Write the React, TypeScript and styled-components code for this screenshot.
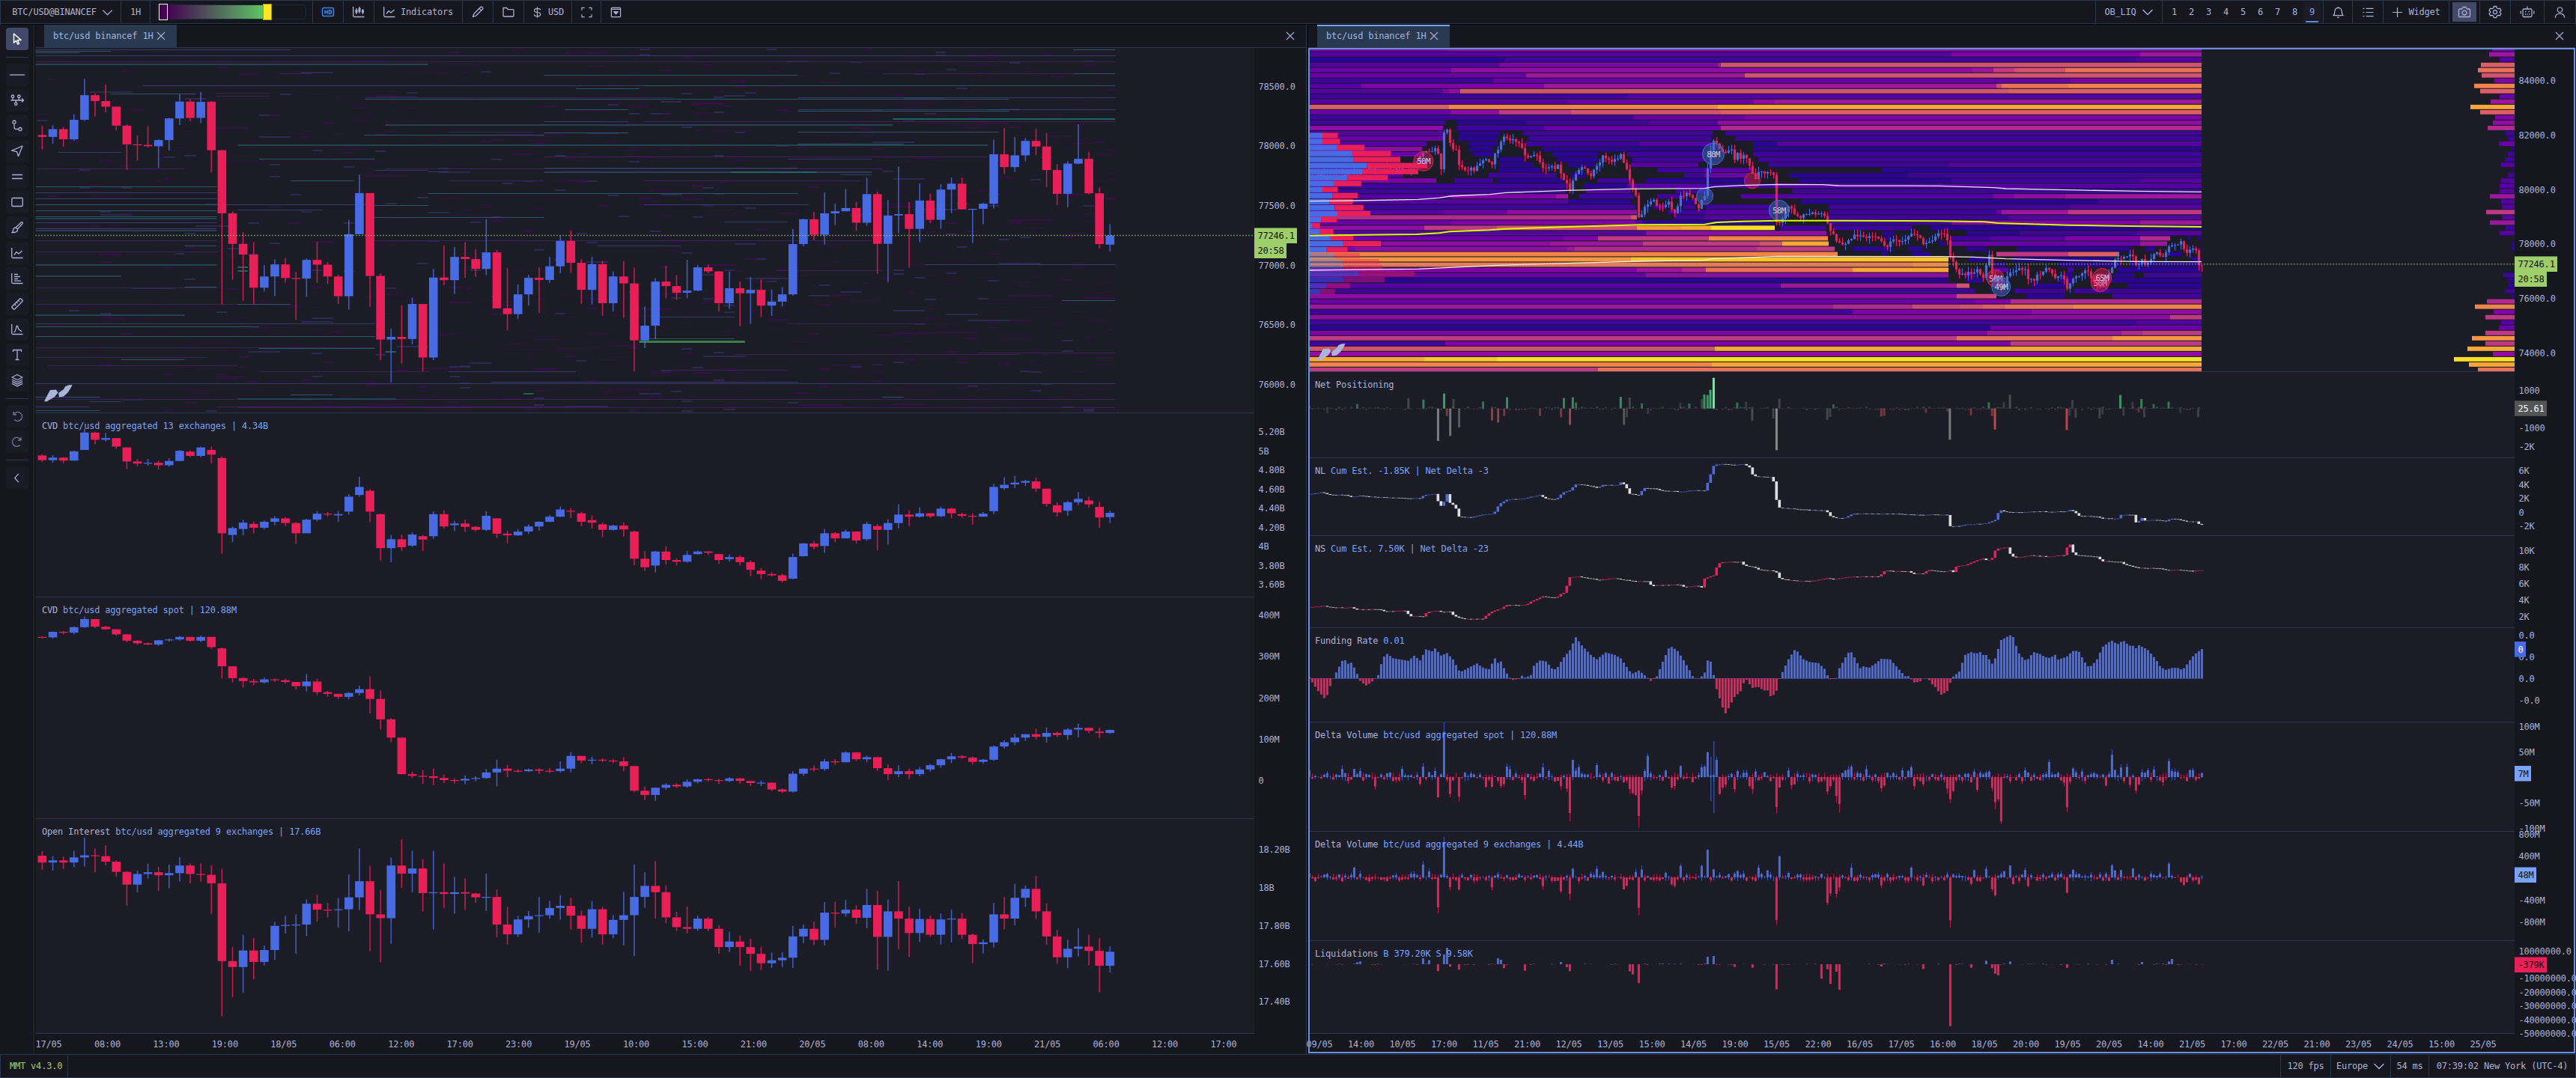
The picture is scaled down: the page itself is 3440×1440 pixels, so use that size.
import * as React from 'react';
import styled, { createGlobalStyle } from 'styled-components';

const BLUE = '#486be4';
const RED = '#e91f58';
const BG = '#1b1c26';
const PANEL = '#16171e';
const LINE = '#29394f';
const TEXT = '#a9b1d6';
const ACCENT = '#7aa2f7';
const GREEN = '#9ece6a';

const GlobalStyle = createGlobalStyle`
  body {
    margin: 0;
    background: ${PANEL};
    color: ${TEXT};
    font-family: 'DejaVu Sans Mono', 'Liberation Mono', monospace;
    font-size: 12px;
    letter-spacing: -0.2px;
    line-height: 16px;
    overflow: hidden;
  }

  * {
    box-sizing: border-box;
  }
`;

const Screen = styled.div`
  display: flex;
  flex-direction: column;
  width: 3440px;
  height: 1440px;
`;

const TopBar = styled.header`
  display: flex;
  height: 33px;
  border: 1px solid ${LINE};
  border-bottom: 0;
  box-shadow: inset 0 -1px 0 #000, inset 0 -2px 0 ${LINE};
`;

const Cell = styled.div<{ w: number; end?: boolean; indent?: number }>`
  display: flex;
  align-items: center;
  justify-content: center;
  gap: 7px;
  width: ${p => p.w}px;
  height: 30px;
  padding-left: ${p => p.indent || 0}px;
  flex: none;
  white-space: pre;
  border-right: ${p => (p.end ? 0 : 1)}px solid ${LINE};
`;

const Spacer = styled.div`
  flex: 1;
  border-right: 1px solid ${LINE};
`;

const Slider = styled.div`
  display: flex;
  width: 200px;
  height: 20px;
  margin-right: 1px;
  padding: 0 2px;
  border: 1px solid #202a38;
  border-radius: 5px;
`;

const Ramp = styled.div`
  display: flex;
  justify-content: space-between;
  align-items: center;
  width: 151px;
  height: 18px;
  background: linear-gradient(90deg, #440154 8%, #5ec962 94%);
`;

const Handle = styled.div<{ color: string; edge: string }>`
  width: 12px;
  height: 22px;
  flex: none;
  background: ${p => p.color};
  border: 1px solid ${p => p.edge};
`;

const Slots = styled.div`
  display: flex;
  width: 215px;
  height: 30px;
  flex: none;
  justify-content: flex-end;
  padding-right: 3px;
  border-right: 1px solid ${LINE};
`;

const Slot = styled.div<{ active?: boolean }>`
  width: 23px;
  height: 28px;
  margin-top: 1px;
  padding-top: 6px;
  text-align: center;
  color: ${p => (p.active ? ACCENT : TEXT)};
  background: ${p => (p.active ? BG : 'none')};
  background-image: ${p => (p.active ? 'linear-gradient(#6688e0, #6688e0)' : 'none')};
  background-size: 17px 2px;
  background-position: center bottom;
  background-repeat: no-repeat;
`;

const Pressed = styled.div`
  display: flex;
  align-items: center;
  justify-content: center;
  width: 32px;
  height: 26px;
  background: #414868;
`;

const Body = styled.div`
  display: flex;
  flex: 1;
`;

const Sidebar = styled.nav`
  display: flex;
  flex-direction: column;
  align-items: center;
  gap: 4px;
  width: 47px;
  padding: 4px 1px 0 0;
  flex: none;
  border-right: 1px solid #000;
  box-shadow: inset -1px 0 0 ${LINE};
`;

const Tool = styled.button<{ active?: boolean; dim?: boolean }>`
  display: flex;
  align-items: center;
  justify-content: center;
  width: 30px;
  height: 30px;
  padding: 0;
  border: 0;
  border-radius: 4px;
  color: ${p => (p.active ? '#fff' : p.dim ? '#737894' : TEXT)};
  background: ${p => (p.active ? '#414868' : '#1a1b25')};
`;

const Rule = styled.div`
  width: 30px;
  height: 1px;
  margin: 5px 0 4px;
  background: ${LINE};
`;

const Widget = styled.section<{ w: number }>`
  width: ${p => p.w}px;
  flex: none;
`;

const Split = styled.div`
  width: 3px;
  flex: none;
  border-left: 1px solid ${LINE};
  background: #0e0f15;
`;

const TabBar = styled.div`
  display: flex;
  align-items: center;
  justify-content: space-between;
  height: 31px;
  padding: 0 13px 0 12px;
  border-bottom: 1px solid ${LINE};
`;

const Tab = styled.div<{ focused?: boolean }>`
  display: flex;
  align-items: center;
  gap: 3px;
  width: 177px;
  height: 30px;
  padding-left: 12px;
  background: ${LINE};
  box-shadow: ${p => (p.focused ? `inset 0 2px 0 ${ACCENT}` : 'none')};
`;

const Charts = styled.div<{ focused?: boolean }>`
  position: relative;
  height: 1344px;

  &::after {
    content: '';
    position: absolute;
    inset: 0 0 1px;
    pointer-events: none;
    border: ${p => (p.focused ? `2px solid #6a8ee0` : '0')};
  }
`;

const PaneRow = styled.div<{ h: number }>`
  position: relative;
  display: flex;
  height: ${p => p.h}px;
`;

const Plot = styled.svg`
  flex: none;
  background: ${BG};
  border-bottom: 1px solid ${LINE};
`;

const Axis = styled.svg`
  flex: none;
  overflow: visible;
  background: ${PANEL};
`;

const PaneTitle = styled.div`
  position: absolute;
  left: 9px;
  top: 9px;
  white-space: pre;

  span {
    color: ${ACCENT};
  }
`;

const TimeAxis = styled.svg`
  display: block;
  overflow: visible;
  background: ${PANEL};
`;

const StatusBar = styled.footer`
  display: flex;
  height: 32px;
  flex: none;
  border: 1px solid ${LINE};
`;

const Version = styled.div`
  display: flex;
  align-items: center;
  width: 90px;
  padding-left: 12px;
  color: ${GREEN};
  border-right: 1px solid ${LINE};
`;

/* ---------- icons ---------- */

const ICONS: { [name: string]: string } = {
  chevron: 'M1.5 5 8 11.5 14.5 5',
  back: 'M10.5 2 5 8l5.5 6',
  close: 'M3 3l10 10M13 3 3 13',
  plus: 'M8 1v14M1 8h14',
  pointer: 'M3.5 1v12.2l3.2-3 2 5 1.900-.8-2-4.800h4.600z',
  line: 'M-2 8h20',
  nodes: 'M-.5 8h17M14 5.500 16.500 8 14 10.500M2 4.500v3.500M10.300 4.500v3.500M6.200 8v3M2 1a1.700 1.700 0 1 0 .01 0M10.300 1a1.700 1.700 0 1 0 .01 0M6.200 11a1.700 1.700 0 1 0 .01 0',
  path: 'M4 1a2.100 2.100 0 1 0 .01 0M12 10.500a2.100 2.100 0 1 0 .01 0M4 5.500v4.500a2.500 2.500 0 0 0 2.500 2.500h3',
  send: 'M15 1 .8 7.200l6.700 1.500 2 6z',
  equal: 'M1 5.500h14M1 10.500h14',
  rect: 'M2 2.500h12a1.200 1.200 0 0 1 1.200 1.200v8.600a1.200 1.200 0 0 1-1.200 1.200H2a1.200 1.200 0 0 1-1.200-1.200V3.700A1.200 1.200 0 0 1 2 2.500z',
  brush: 'M6 8 13.500.8q2-.8 1.700 1.700L8.500 10M6 8l2.500 2.200q.5 4.500-7.500 4.500 1.500-1.200 1.500-3Q3 8.200 6 8z',
  chart: 'M.7 1v12q0 1.500 1.500 1.500H15.500M4 10.500l3-4 3 2.500 4.500-4',
  profile: 'M.7 1v12q0 1.500 1.500 1.500H15.500M4 2.500h5M4 5.500h8M4 8.500h5M4 11.200h9',
  ruler: 'M1 11.500 11.500 1q.7-.5 1.300 0l2.200 2.200q.5.7 0 1.300L4.500 15q-.7.5-1.300 0L1 12.800q-.5-.7 0-1.300zM4.500 8.200l1.800 1.800M7 5.800l1.500 1.500M9.500 3.400l1.700 1.700',
  peak: 'M.7 1v12q0 1.500 1.500 1.500H15.500M3.500 12q2.500-1 3.500-8.500h1.500q1 5 2.500 5l3 2.500',
  text: 'M2.500 4V1.500h11V4M8 1.500v13M5.500 14.500h5',
  layers: 'M8 .5 15 4 8 7.500 1 4zM1 7l7 3.500L15 7M1 9.700l7 3.500 7-3.500M1 12.300l7 3.500 7-3.500',
  undo: 'M3 2v4h4M3.300 5.500A6 6 0 1 1 4.200 12.500',
  redo: 'M13 2v4H9M12.700 5.500A6 6 0 1 0 11.800 12.500',
  hd: 'M2.500 2.500h11a2 2 0 0 1 2 2v7a2 2 0 0 1-2 2h-11a2 2 0 0 1-2-2v-7a2 2 0 0 1 2-2zM4 5.500v5M7 5.500v5M4 8h3M9.300 5.500v5q3.500 0 3.500-2.500T9.300 5.500z',
  candles: 'M.7 1v12q0 1.500 1.500 1.500H15.500M5 3v8M9 1v9M13.500 4v7',
  pencil: 'M1.500 14.500 3 10.200 12 1.300q.8-.6 1.500 0l1.200 1.200q.6.7 0 1.500L5.700 13zM10 3.300 12.700 6',
  folder: 'M1 2.500h4.500l2 2.200H14q1 0 1 1V13q0 1-1 1H2q-1 0-1-1z',
  dollar: 'M12.500 4.500Q12 2.500 8 2.500T3.800 5.200 8 8t4.500 2.800Q12.500 13.500 8 13.500T3.500 11M8 .3v15.400',
  expand: 'M1 5V1.500h4M11 1.500h4V5M15 11v3.500h-4M5 14.500H1V11',
  drop: 'M2.500 1.500h11q1 0 1 1v11q0 1-1 1h-11q-1 0-1-1v-11q0-1 1-1zM2 3.500h12',
  bell: 'M1 12.500q2-1.500 2-5.500 0-5 5-5.500 5 .5 5 5.500 0 4 2 5.500zM6.500 15h3M8 0v1.500',
  list: 'M5 2.500h10.500M5 8h10.500M5 13.500h10.500M.5 2.500h2M.5 8h2M.5 13.500h2',
  camera: 'M1.500 4h3l1.500-2.500h4L11.500 4h3q1 0 1 1v8.500q0 1-1 1h-13q-1 0-1-1V5q0-1 1-1zM8 6.200a2.900 2.900 0 1 0 .01 0',
  gear: 'M6.300.5h3.400l.6 2.300 1.700 1 2.300-.7L16 6l-1.700 1.600v1L16 10.200 14.300 13l-2.300-.6-1.700 1-.6 2.200H6.300l-.6-2.200-1.700-1-2.300.6L0 10.200l1.700-1.600v-1L0 6l1.700-2.900 2.300.7 1.700-1zM8 5.500a2.600 2.600 0 1 0 .01 0',
  bot: 'M3.500 4h9q1.500 0 1.500 1.500V13q0 1.500-1.500 1.500h-9Q2 14.500 2 13V5.500Q2 4 3.500 4zM8 4V.5M-.8 6.500v4M16.800 6.500v4M5 7.500h1.500M9.500 7.500H11M4.800 11h1.200M7.400 11h1.200M10 11h1.200',
  user: 'M8 .8a3.600 3.600 0 1 0 .01 0M1.500 15.800q0-6 6.500-6t6.500 6',
};

interface IconProps {
  name: string;
  size?: number;
  color?: string;
  weight?: number;
}

const Icon = ({ name, size = 16, color = 'currentColor', weight = 1.3 }: IconProps) => (
  <svg
    width={size}
    height={size}
    viewBox="0 0 16 16"
    fill="none"
    stroke={color}
    strokeWidth={weight}
    strokeLinejoin="round"
    overflow="visible"
  >
    <path d={ICONS[name]} />
    {name === 'candles' && <path d="M5 5v4M9 3v5M13.500 5.500v3.500" strokeWidth={3} />}
    {name === 'drop' && <path d="M5 7h6l-3 3.500z" fill={TEXT} />}
  </svg>
);

const Logo = ({ x, y }: { x: number; y: number }) => (
  <path
    transform={`translate(${x},${y})`}
    fill="#aab4d9"
    d="M0 22 5 12.500 8 7l8-.5 2.500 4-5 6-8 4.500-2 1.500zM20 16.500 19 11l6.500-4.500L28.500 2 33 .2l4.500-.2-1.500 3.500-4.500 7L26 15.500z"
  />
);

/* ---------- data ---------- */

// deterministic noise, so the filler bars never jump between renders
const random = (seed: number) => () => {
  seed = (seed * 16807) % 2147483647;
  return seed / 2147483647;
};

const parse = (rows: string) => rows.trim().split(/\s*,\s*/).map(r => r.trim().split(/\s+/).map(Number));

// every entry: close, high, low and, where it gaps, open
const PRICE = parse(`512 470 559 505,483 468 538,521 475 548,448 427 526,356 295 453,378 350 436,399 316 420,470 399 488,
540 466 635,542 507 601,547 471 552,524 521 628,443 441 563,380 353 468,441 371 453,381 344 460,562 378 646,798 560 1139,
912 791 1046,952 868 1125,1076 906 1137,1034 992 1090,989 970 1108,1040 964 1057,1042 1017 1196,972 967 1111,990 905 1057,
1034 980 1062,1108 1027 1137,876 823 1158,722 653 876,1032 722 1147,1270 1023 1347,1260 1230 1430,1268 1142 1360,
1137 1113 1288,1337 1137 1389,1038 1006 1347,1048 918 1067,961 924 1100,969 906 1039,1006 932 1035,944 820 1029,
1153 935 1153,1175 1003 1235,1101 1064 1192,1039 1028 1143,1047 1000 1171,996 961 1058,901 880 1022,983 861 1021,
1084 970 1137,988 961 1139,1134 975 1180,1034 1015 1165,1060 977 1189,1273 1001 1389,1218 1147 1302,1053 1040 1268,
1070 994 1116,1095 1029 1122,1087 972 1115,1000 991 1089,1015 990 1022,1134 1015 1165,1078 1015 1155,1097 1053 1220,
1084 1036 1211,1143 1045 1186,1128 1083 1181,1101 1074 1147,913 857 1105,820 818 922,878 793 898,798 720 915,790 762 842,
778 707 790,833 755 864,726 665 845,912 716 1024,806 748 1055,801 623 873,856 756 1001,750 686 906,822 724 835,
709 689 856,687 664 797,783 664 783,781 781 909,762 758 839,577 523 780,625 479 651,581 513 643,527 516 604,548 482 580,
636 498 700,725 614 768,612 603 775,594 465 614,723 568 727,913 701 930,881 838 941 915`);

const CVD = parse(`114 100 118 103,108 102 120,115 107 121,93 92 115,49 40 90 90,66 47 77,62 50 70,82 63 87,117 84 135 84,122 111 128,
120 111 127,126 115 136,116 110 129,92 90 116,104 91 107 94,84 82 107,101 82 121 90,286 105 334 109,274 270 307 290,
261 254 291 276,273 259 286 264,259 256 277,251 246 267,262 248 269,286 260 311,254 252 285,240 234 258,242 236 247,
241 234 259 244,200 194 242 235,177 153 200 196,235 182 260 186,321 240 351 241,300 290 354,319 289 328,289 284 318 315,
301 290 328 293,241 234 299 293,270 232 275,263 257 281 267,271 254 283,278 269 282,245 234 281,287 250 297 251,
291 280 310,282 276 292,270 265 287,259 258 280,247 243 260,230 223 248,235 227 250 233,259 235 270 239,261 244 275 255,
278 261 295 265,268 266 280,277 261 294,346 280 361 282,366 328 375,329 328 378 362,349 317 360,353 345 361,337 328 355,
329 327 337 335,332 328 337,349 334 358 335,342 336 353 347,354 338 362,372 350 387,382 368 394 374,385 378 388,
398 381 402,342 334 394 393,310 309 341 340,318 304 324,286 276 332 316,298 283 307,282 277 298,303 282 310,264 259 304 300,
278 264 326 269,262 253 313,242 218 275,247 232 269,239 225 249,246 239 250,228 223 248,239 226 251,245 238 250 241,
247 239 265,240 236 247,177 170 241 234,172 154 184 180,167 151 180 171,163 160 175,181 155 189 164,217 181 224,
237 213 247 220,213 210 245 233,205 189 220,218 200 226 209,249 212 273 224,238 233 262 248`);

const CVD_SPOT = parse(`531 529 533 530,518 517 534,520 516 524,507 506 524,488 482 509,506 488 509,512 504 512,524 512 527,539 523 543,
545 537 549,548 543 549,538 537 551,536 534 541,530 528 539,539 531 541,530 527 542,554 530 558,599 555 628 557,
627 600 637,634 624 649,637 629 644,630 626 640,632 628 636,636 628 640,646 636 654,635 617 658,660 628 667,664 657 671,
671 664 676,662 660 677,653 645 667,676 623 710,724 656 748,767 721 778,853 766 854,857 847 862,858 843 876,862 840 879,
867 854 874,868 863 875,864 856 877,862 858 870,849 841 864,840 819 882,845 831 860,846 841 849,842 840 848,845 839 852,
846 839 850,840 823 849,810 801 849,821 810 827,819 812 830,821 816 825,823 817 827,834 813 846,892 833 896,902 882 914,
885 884 916,878 874 890,882 874 886,871 865 885,865 864 875,867 862 870,869 864 876,863 860 872,869 862 875,874 869 881,
873 868 881,889 872 893,894 887 897,852 846 896,840 839 857,841 833 847,823 817 845,825 817 831,802 799 823,818 801 822,
813 809 825,839 812 845,853 830 867,846 832 860,853 840 864,842 836 858,832 829 847,818 817 838,811 803 827,814 808 817,
824 811 830,819 817 828,788 785 822,778 773 793,767 758 785,759 759 775,765 746 771,756 743 779,761 753 766,748 745 772,
744 734 766,751 743 757,756 743 768 753,749 748 758`);

const OPEN_INTEREST = parse(`1061 1034 1078 1045,1056 1046 1080,1061 1047 1076,1049 1033 1072,1044 1002 1070,1046 1028 1084,1059 1020 1068,
1083 1056 1094,1113 1081 1162,1088 1080 1131,1084 1064 1099,1091 1071 1128,1086 1066 1122,1068 1048 1106,1088 1063 1110,
1090 1063 1106,1110 1067 1182,1293 1076 1423,1307 1260 1378,1268 1231 1368,1295 1239 1336,1267 1256 1303,1210 1201 1290,
1208 1187 1228,1207 1183 1276,1158 1148 1234,1172 1137 1200,1173 1156 1190,1171 1145 1214,1143 1089 1223,1105 1028 1173,
1183 1069 1270,1192 1126 1296,1068 1049 1252,1087 1006 1121,1075 1033 1131,1133 1053 1176,1131 1033 1219,1135 1063 1168,
1131 1095 1181,1134 1098 1173,1143 1132 1156,1142 1087 1175,1207 1124 1237,1230 1166 1254,1195 1187 1236,1187 1175 1215,
1185 1142 1226,1168 1151 1194,1163 1138 1195,1186 1144 1219,1217 1174 1250,1171 1152 1238,1230 1165 1254,1196 1185 1239,
1185 1130 1256,1142 1066 1281,1116 1084 1167,1131 1058 1193,1190 1115 1204,1213 1177 1222,1217 1165 1228,1193 1186 1222,
1217 1189 1222,1260 1209 1276,1247 1224 1272,1260 1233 1304,1276 1240 1316,1298 1259 1314,1291 1273 1309,1285 1272 1307,
1235 1210 1309,1217 1207 1251,1243 1200 1255,1179 1154 1256,1181 1153 1214,1172 1149 1188,1191 1162 1205,1161 1123 1216,
1236 1128 1313,1176 1148 1315,1193 1105 1265,1227 1165 1283,1194 1170 1248,1231 1186 1236,1195 1181 1254,1193 1172 1249,
1231 1180 1241,1253 1228 1298,1249 1242 1275,1183 1156 1261,1193 1142 1218,1144 1111 1209,1123 1115 1165,1176 1092 1194,
1235 1157 1255,1284 1220 1300,1264 1243 1310,1259 1216 1282,1269 1231 1303,1304 1239 1367,1271 1258 1320`);

// resting orders: from, to, level, shade
const DEPTH = parse(`82 676 186 1,82 258 193 2,82 185 197 2,82 2594 208 1,82 2594 231 0,82 996 238 3,258 455 351 2,332 1568 320 1,1498 2594 320 2,
652 725 275 0,504 627 348 0,504 627 360 0,848 2347 371 2,848 1568 365 0,1856 2594 365 1,1266 1856 282 2,1340 1487 331 2,
1315 1462 409 2,1266 1462 454 1,897 2077 465 3,848 1266 505 2,1266 1462 498 2,1044 1241 494 0,553 2298 543 3,602 872 595 2,
135 282 569 1,85 430 632 0,872 996 638 1,1266 1856 628 3,1266 2028 643 3,996 1044 643 1,676 823 676 2,996 1856 723 2,
82 504 698 2,82 504 721 1,82 504 743 1,82 504 765 2,82 504 788 2,82 504 810 2,82 504 817 3,82 504 833 1,82 504 855 1,
82 504 861 3,553 750 785 1,872 996 769 2,872 1266 813 2,504 872 765 1,82 504 900 0,82 504 943 0,82 504 989 3,82 504 1077 0,
430 504 921 2,430 504 1073 2,82 282 1033 3,82 676 1138 0,553 676 1138 2,82 430 1176 3,82 872 1211 1,82 602 1222 2,82 872 1258 2,
82 872 1300 0,602 872 1303 2,282 430 1345 2,82 480 1338 0,110 553 1367 0,602 1000 1390 0,82 1568 1434 1,82 233 1486 2,
82 2594 1494 0,208 282 1502 1,553 921 1491 3,82 208 1523 1,82 233 1535 2,676 774 1478 2,1044 1339 1390 1,1143 1856 1430 1,
2053 2594 275 0,2496 2594 186 2,2496 2594 275 2,1856 2347 415 2,1856 2594 409 1,2298 2372 409 2,2077 2594 445 4,1498 2594 454 0,
1856 2323 494 2,1856 2102 539 2,1832 2028 595 1,1498 1881 765 1,1684 1832 830 1,1498 2003 676 0,2151 2594 989 1,
2470 2594 1124 2,1808 2053 1012 0,1832 2151 1210 0,1498 1708 1268 2,1708 2372 1327 0,2274 2594 1320 0,1568 2594 1434 1,
2053 2102 1486 2,1561 1832 1385 0,1487 1733 1275 5,1218 1241 1471 4,553 2594 1524 0,897 2053 632 0,
1266 2053 587 0,2053 2298 587 0,1956 2028 653 1,872 2028 900 0,1044 1266 676 0,1700 1900 643 4,553 577 997 4,553 577 1013 4,
897 921 1314 4,1518 1708 1185 1,1389 1585 921 1,504 1400 1523 0`);
const DEPTH_COLORS = ['#432063', '#3b3f78', '#2b6075', '#244a5c', '#1f6f68', '#3d8f4d'];

const CURVES = {
  price: `15 700,60 690,100 700,160 680,200 670,260 680,285 640,300 605,325 600,333 610,340 683,348 535,358 520,365 598,378 600,386 675,
400 675,420 680,440 650,455 640,468 655,476 605,485 590,490 550,500 550,510 558,530 562,542 598,550 630,575 625,590 665,610 675,
630 665,640 705,658 760,668 705,685 670,710 700,725 660,740 625,765 650,785 620,795 670,810 750,820 785,828 885,840 830,860 795,
875 825,890 830,900 800,918 865,932 780,955 780,975 840,985 795,992 790,998 655,1005 600,1013 555,1025 600,1040 605,1055 600,
1065 640,1072 600,1080 640,1090 620,1100 655,1112 725,1125 675,1140 705,1150 685,1160 710,1167 890,1175 885,1185 870,1197 820,
1210 850,1227 870,1240 860,1270 850,1288 870,1295 905,1305 935,1320 975,1345 970,1360 945,1385 955,1410 950,1425 960,1437 1005,
1450 965,1485 965,1500 930,1515 940,1528 975,1550 970,1560 945,1570 935,1585 940,1590 980,1596 1040,1606 1060,1616 1095,
1631 1100,1646 1095,1661 1080,1677 1110,1685 1060,1691 1018,1698 1095,1707 1120,1717 1165,1727 1140,1742 1095,1757 1080,
1778 1080,1788 1115,1798 1130,1813 1100,1828 1085,1833 1060,1843 1095,1859 1115,1872 1095,1882 1155,1896 1115,1914 1100,
1930 1085,1945 1120,1960 1160,1975 1120,1985 1105,1992 1070,2000 1045,2021 1038,2046 1020,2053 1065,2066 1040,2076 1060,
2091 1030,2107 1015,2119 1033,2132 980,2142 985,2162 970,2172 1000,2180 1020,2190 990,2198 990,2208 1065,2215 1060`,
  longs: `15 512,45 505,65 513,110 515,115 525,140 518,180 524,290 529,298 515,328 510,335 552,343 562,355 512,363 548,375 560,385 603,
415 605,445 594,470 590,485 550,505 533,545 530,585 514,595 528,625 534,640 505,660 495,670 472,690 473,725 486,740 475,778 475,
785 460,795 480,805 510,828 517,840 487,865 488,880 497,935 502,955 497,990 497,1003 440,1013 394,1030 391,1060 395,1085 390,
1100 402,1110 440,1155 444,1165 478,1168 565,1190 568,1250 576,1290 576,1296 598,1315 607,1335 607,1355 590,1450 590,1530 596,
1550 592,1590 595,1595 640,1621 640,1636 632,1681 630,1702 617,1710 612,1715 572,1727 581,1752 585,1803 581,1879 582,1889 576,
1902 580,1909 597,1955 601,1970 609,2010 610,2016 595,2049 595,2053 628,2067 608,2073 618,2101 614,2127 620,2137 610,2157 612,
2177 621,2203 622,2208 633,2215 635`,
  shorts: `15 965,50 960,80 966,120 966,130 974,190 973,197 982,255 978,262 1000,298 1002,305 984,330 978,345 986,362 981,372 1000,395 1012,
445 1012,453 996,468 980,490 970,500 957,550 956,565 940,590 921,625 928,637 910,645 905,652 870,658 843,680 842,730 856,765 848,
820 862,850 860,860 880,885 876,930 874,935 883,980 879,985 893,990 848,1012 838,1020 803,1028 785,1080 782,1088 798,1110 803,
1125 815,1165 820,1175 850,1200 857,1250 861,1290 849,1310 852,1345 843,1420 841,1435 817,1460 822,1490 820,1505 831,1530 830,
1540 815,1580 822,1595 817,1602 825,1611 800,1631 798,1651 782,1676 770,1687 778,1700 765,1707 732,1722 727,1737 725,1744 757,
1757 766,1793 757,1833 762,1879 756,1885 707,1894 720,1899 754,1960 763,1967 780,2015 784,2026 795,2046 803,2066 808,2107 808,
2132 817,2157 814,2193 820,2215 817`,
  funding: `15 1240,22 1262,37 1298,53 1328,62 1312,68 1275,75 1248,82 1225,97 1178,105 1176,112 1190,120 1185,127 1207,135 1235,142 1262,
157 1278,170 1262,180 1246,187 1232,193 1190,201 1158,208 1150,222 1168,260 1178,274 1158,289 1177,303 1132,318 1140,326 1128,
340 1157,355 1147,370 1173,385 1218,393 1220,407 1207,430 1188,440 1203,458 1213,473 1168,480 1187,488 1181,496 1210,503 1230,
511 1248,518 1255,533 1250,540 1237,548 1246,562 1235,570 1194,585 1176,600 1181,615 1212,625 1212,640 1170,658 1135,672 1083,
688 1118,710 1155,724 1172,746 1145,768 1154,783 1168,805 1219,813 1229,828 1217,843 1237,858 1260,872 1240,887 1180,901 1129,
909 1122,923 1138,938 1175,953 1216,962 1245,975 1250,983 1240,990 1225,997 1177,1004 1177,1012 1235,1019 1290,1027 1330,
1034 1365,1041 1390,1049 1368,1063 1324,1078 1302,1085 1270,1092 1252,1107 1287,1121 1282,1136 1297,1145 1297,1152 1320,
1160 1315,1167 1298,1174 1252,1182 1222,1196 1173,1211 1135,1218 1140,1233 1171,1248 1183,1270 1187,1285 1210,1292 1235,
1300 1252,1314 1250,1321 1210,1329 1187,1343 1146,1351 1143,1358 1162,1373 1208,1380 1200,1395 1206,1410 1190,1425 1170,
1447 1172,1462 1200,1484 1240,1491 1238,1506 1265,1520 1262,1528 1248,1540 1248,1550 1272,1558 1283,1572 1315,1587 1302,
1594 1270,1602 1242,1617 1222,1631 1155,1646 1143,1659 1150,1668 1142,1676 1155,1684 1155,1698 1190,1705 1172,1720 1095,
1742 1076,1749 1078,1756 1112,1763 1145,1778 1175,1786 1173,1800 1143,1815 1150,1829 1163,1843 1167,1852 1150,1859 1174,
1882 1162,1896 1139,1911 1138,1932 1200,1941 1200,1955 1178,1970 1123,1992 1096,2007 1112,2021 1096,2036 1118,2044 1115,
2051 1131,2059 1115,2081 1133,2102 1173,2112 1200,2125 1215,2140 1207,2155 1206,2167 1215,2177 1195,2190 1165,2199 1150,
2214 1131`,
};

const NET = `134 150 1,60 187 0,260 127 0,297 132 1,333 298 0,348 108 1,355 198 2,363 278 0,371 130 0,385 244 0,444 140 1,466 216 2,481 224 2,496 198 2,
503 123 1,584 198 2,643 126 1,636 203 2,658 234 2,665 123 1,673 144 1,783 121 1,791 234 0,798 203 0,805 124 0,835 147 1,850 190 0,
930 145 0,952 148 1,983 130 0,989 112 1,997 114 1,1004 93 1,1012 45 1,1070 144 1,1092 141 0,1107 217 0,1159 208 0,1167 335 0,
1174 128 0,1292 213 0,1299 202 0,1307 152 1,1425 200 2,1432 197 2,1535 185 2,1588 180 2,1594 293 0,1646 195 2,1690 143 1,1698 198 2,
1705 252 2,1727 142 0,1742 113 0,1882 254 2,1889 197 0,1896 133 0,1904 205 0,1963 208 0,1970 192 0,2014 114 1,2022 197 0,2044 142 0,
2066 130 1,2059 183 2,2073 203 0,2096 150 1,2133 140 1,2162 187 0,2206 203 0`;

const DELTA_SPOT = `15 207,97 202,127 202,142 210,180 272,245 202,290 262,297 192,311 215,326 210,333 315,348 53,355 245,363 302,385 313,437 225,
452 273,466 273,489 270,496 262,503 192,510 203,547 306,592 195,607 210,636 270,650 280,658 378,665 165,673 208,680 195,724 186,757 260,
790 255,805 282,813 298,820 306,828 390,835 288,843 210,850 150,894 208,909 276,916 270,930 190,960 255,983 195,989 192,997 135,
1005 228,1012 226,1019 165,1027 302,1034 276,1041 264,1063 282,1070 210,1100 270,1107 282,1115 212,1137 215,1167 354,1174 276,1196 208,1204 267,
1211 264,1292 292,1299 270,1314 310,1321 342,1329 218,1336 208,1343 204,1351 192,1387 202,1425 279,1432 268,1476 207,1491 210,
1498 195,1506 270,1528 262,1587 280,1594 323,1602 290,1610 247,1646 255,1653 212,1661 285,1684 217,1690 212,1698 278,1705 335,
1712 323,1720 411,1779 207,1786 216,1830 222,1838 174,1875 257,1882 355,1889 253,1896 200,1904 215,1918 212,1977 268,1992 145,
1999 206,2015 196,2029 193,2037 265,2051 288,2059 264,2066 215,2081 207,2096 204,2118 255,2133 170,2140 210,2147 213,2155 215,
2184 206,2192 206,2206 240,2214 218`;

const DELTA_ALL = `127 597,297 585,311 612,333 756,348 495,363 675,385 685,466 676,592 671,636 692,658 702,665 602,724 602,739 614,791 684,798 670,
820 614,828 758,835 605,894 618,909 663,916 670,930 590,983 590,997 526,1012 604,1070 611,1122 597,1145 608,1167 806,1174 552,
1196 618,1292 738,1299 700,1314 702,1321 676,1351 597,1425 668,1498 597,1528 668,1594 808,1646 662,1653 608,1684 602,1698 683,
1705 708,1727 611,1742 588,1749 663,1779 607,1786 671,1882 697,1896 606,1992 588,1999 608,2015 607,2044 600,2133 581,2162 655,
2170 666,2177 655,2206 663`;

const LIQUIDATIONS = `135 976,142 973,297 960,311 968,333 1012,348 945,355 918,363 994,385 1006,481 960,488 966,496 1000,547 1010,636 975,650 996,
658 1012,805 1013,813 1025,828 1060,997 954,1012 951,1063 995,1107 998,1167 1085,1277 1042,1292 1004,1299 1063,1314 1014,
1321 1087,1425 993,1528 1003,1594 1232,1646 998,1684 970,1698 1000,1705 1022,1712 1028,1742 973,1882 999,1992 966,2066 975,
2133 973,2140 963`;

const VWAP = [
  {
    color: '#e9e6f2',
    width: 1.3,
    points: `12 806,130 804,285 799,335 793,362 786,460 779,500 772,650 763,800 757,990 755,1015 748,1080 743,1170 739,1280 740,1320 744,1568 745,1702 752,1732 756,1884 761,2056 766,2214 769`,
  },
  {
    color: '#dcff00',
    width: 2,
    points: `12 944,280 939,335 934,362 928,460 922,500 917,650 909,830 901,990 899,1020 891,1080 887,1170 884,1320 884,1568 886,1681 889,1712 894,1884 902,2036 906,2214 909`,
  },
  {
    color: '#f3efe8',
    width: 1.3,
    points: `12 1083,285 1078,350 1073,480 1063,650 1055,830 1047,990 1042,1015 1036,1110 1031,1170 1027,1568 1028,1651 1030,1732 1037,1884 1043,2056 1048,2214 1049`,
  },
];

// one row per price level: shade, then the x where the next shade begins ("-" is empty)
const HEAT = `e 187 f|c 858 e 1110 g|a 262 b 1105 c|c 254 e 546 g 550 k|d 190 f 886 g 914 i 942 k 1010 m|d 290 g 582 k|b 246 d 1017 e|
c 70 e 314 g 918 j 925 m 1014 n|c 179 e 187 f 202 k 934 l|b 425 c|c 346 d 594 f 622 g|l 187 n 546 p|d 190 f 254 i 350 k 550 l|
b 434 d 582 e|b 182 - 198 a 290 b 454 c 546 f|f 179 - 198 b 314 d 550 h|c 179 - 200 a 255 - 286 b 539 - 556 b|
d 179 - 200 a 252 - 293 b 537 - 569 b|c 157 - 214 a 252 - 290 b 441 c 537 - 593 a 626 c|f 151 - 214 a 246 - 312 a 528 - 593 a|
d 151 - 220 a 246 - 325 a 385 - 425 b 528 - 593 b|b 122 - 254 a 290 - 332 a 385 - 432 b 528 - 600 b|
b 122 - 254 a 300 - 346 a 382 - 430 c 520 - 614 b 854 c|b 130 - 254 a 310 - 466 b 528 c 593 - 765 a|
c 126 - 240 b 330 - 350 a 370 - 501 b 528 d 586 - 642 a 800 b|e 170 - 194 b 246 - 252 a 340 - 385 b 430 - 450 a 590 - 654 a 858 b 1110 c|
b 343 - 368 a 425 c 530 b 620 c|b 343 - 370 c 430 - 490 b 530 - 645 b|c 190 e 330 g 346 - 361 b 434 - 465 b 500 - 577 c 914 e 942 f 1010 g|
c 346 a 430 - 495 a 516 - 657 a 1054 b|b 436 - 460 b 475 - 500 b 516 - 530 b 618 - 694 b 1017 c|
c 180 d 265 f 438 - 480 b 530 c 618 - 695 b 918 d 925 g 1014 i|h 430 k 438 - 488 b 528 c 618 - 691 b 934 c|
d 190 e 436 c 446 a 620 - 691 b 858 e 1110 g|f 154 i 251 k 438 o 497 p 537 r 622 - 630 b 690 - 700 b 805 - 830 a|
c 450 f 691 - 765 a 782 - 878 a 949 b 1105 c|d 340 e 386 i 534 n 693 - 769 a 777 - 858 b 910 c 1010 e 1110 h 1150 - 1174 a 1178 - 1187 a|
f 322 g 446 i 602 k 632 p 694 - 842 a 850 - 858 d 1110 g 1146 -|e 62 f 345 g 355 h 598 i 702 - 725 a 780 - 800 a 820 - 878 a 906 - 946 a 1098 - 1118 a 1130 - 1189 a|
n 706 - 765 a 772 - 805 a 830 - 918 i 1014 l 1082 - 1150 a 1165 -|o 430 q 854 - 882 a 905 - 940 a 1073 - 1178 a|
m 806 n 854 - 915 a 930 - 1002 a 1085 - 1095 a|e 438 g 498 h 530 m 726 p 854 - 915 c 934 - 1013 b 1021 - 1080 a|
d 450 f 854 - 878 b 890 - 1010 a 1020 - 1075 a 1102 - 1115 b|a 854 - 878 a 900 - 1000 a 1022 - 1072 a 1100 a|
c 630 g 865 k 882 - 965 a 1010 - 1093 a|b 890 - 942 b 1010 - 1022 b|f 865 j 918 - 958 a 1010 - 1073 b|d 890 e 937 h|
g 700 h 806 j 870 k 900 l 930 m 1021 n|b 726 e 965 f|f 1150 i|b 1105 c|a 910 d|e 906 g 1085 h 1113 i|i 865 m 1073 o|
b 182 e 937 i|k 542 p|f|p 154 q 251 r|n 538 p|i 386 m`
  .split('|')
  .map(row => row.trim().split(' '));

const PLASMA: { [key: string]: string } = {
  a: '#2a0593', b: '#3f049c', c: '#5601a4', d: '#6a00a8', e: '#7e03a8', f: '#8f0da4',
  g: '#9c179e', h: '#b12a90', i: '#bf3984', j: '#cb4679', k: '#d35171', l: '#dd5e66',
  m: '#e97158', n: '#f2844b', o: '#f89540', p: '#fca636', q: '#fdc527', r: '#f8df25',
};

const BOOK = `30e 34g 20c 45l 49m 44k 27e 54n 46l 20d 32g 59p 46l 26e 29f 36h 12b 9b 21d 5a 9b 13b 18c 2a 9b 18c 20c 20c 33g 18c 17c 38i 17c 33g 12b 20c 1a 4a 4a 0a 0a 0a 0a 15b 8a 8a 13b 5a 37h 53n 28e 39i 18c 21d 39i 57o 39i 63p 29f 81r 61p 49m`
  .split(' ');

const PROFILE = parse(`48 86,48 91,83 152,120 217,125 240,158 306,146 284,110 209,76 144,48 86,73 135,66 123,78 149,85 166,45 83,23 42,42 75,68 124,
99 192,58 110,76 140,97 188,100 196,138 275,100 201,58 116,42 79`);

const BUBBLES = [
  { x: 297, y: 646, r: 13, up: false, label: '50M' },
  { x: 1011, y: 617, r: 14.5, up: true, label: '88M' },
  { x: 1107, y: 724, r: 10.5, up: false, label: '' },
  { x: 990, y: 786, r: 11, up: true, label: '' },
  { x: 1173, y: 843, r: 13.5, up: true, label: '58M' },
  { x: 1706, y: 1115, r: 11.5, up: false, label: '50M' },
  { x: 1720, y: 1149, r: 12.5, up: true, label: '49M' },
  { x: 1964, y: 1133, r: 12, up: false, label: '50M' },
  { x: 1969, y: 1113, r: 12.5, up: false, label: '65M' },
];

/* ---------- chart parts ---------- */

const COUNT = 299;
const barX = (i: number) => 1193.5 - 4 * (COUNT - 1 - i);
const gridX = (x: number) => x / 1.845 - 7;

const sample = (points: number[][], x: number) => {
  for (let i = 1; i < points.length; i++) {
    const [x0, y0] = points[i - 1];
    const [x1, y1] = points[i];
    if (x <= x1) {
      return y0 + ((y1 - y0) * Math.max(0, x - x0)) / (x1 - x0);
    }
  }
  return points[points.length - 1][1];
};

const Candles = ({ rows, scale, offset = 0 }: { rows: number[][]; scale: number; offset?: number }) => (
  <>
    {rows.map(([close, high, low, gap], i) => {
      const open = gap !== undefined ? gap : rows[i - 1][0];
      const x = 9.4 + i * 14.118;
      const y = (v: number) => v / scale + offset;
      const fill = close < open ? BLUE : RED;
      const top = y(Math.min(open, close));
      return (
        <g key={i} fill={fill}>
          <rect x={x - 0.8} y={y(high)} width={1.6} height={y(low) - y(high)} opacity={0.8} />
          <rect x={x - 5.8} y={top} width={11.6} height={Math.max(1.2, y(Math.max(open, close)) - top)} />
        </g>
      );
    })}
  </>
);

const Orders = () => {
  const rnd = random(77);
  const filler = Array.from({ length: 1100 }, () => {
    const col = Math.floor(Math.pow(rnd(), 0.8) * 102);
    const cells = rnd() < 0.7 ? 1 : 1 + Math.floor(rnd() * 4);
    const y = 64 + Math.floor(rnd() * 485);
    return { x: 2.3 + col * 14.118, w: Math.min(cells, 102 - col) * 14.118, y, tone: rnd() };
  });
  return (
    <>
      {filler.map((f, i) => (
        <rect
          key={i}
          x={f.x}
          y={f.y}
          width={f.w}
          height={f.tone > 0.6 ? 2 : 1}
          fill={f.tone > 0.8 ? '#35316a' : '#440a5c'}
          opacity={0.35 + f.tone * 0.35}
        />
      ))}
      {DEPTH.map(([from, to, y, c], i) => (
        <rect
          key={i}
          x={from / 1.742 - 47}
          y={Math.round(y / 2.8 - 0.5)}
          width={(to - from) / 1.742}
          height={c === 5 ? 3 : c > 2 ? 2 : 1}
          fill={DEPTH_COLORS[c]}
          opacity={0.85}
        />
      ))}
    </>
  );
};

const HourCandles = () => {
  const rnd = random(31);
  const points = parse(CURVES.price);
  let last = 700;
  return (
    <>
      {Array.from({ length: COUNT }, (_, i) => {
        const x = barX(i);
        const close = sample(points, (x + 7) * 1.845) + (rnd() - 0.5) * 16;
        const open = last;
        last = close;
        const top = Math.min(open, close);
        const size = Math.abs(open - close);
        const high = top - rnd() * 22;
        const low = top + size + rnd() * 24;
        return (
          <g key={i} fill={close < open ? BLUE : RED}>
            <rect x={x - 0.5} y={high / 3} width={1} height={(low - high) / 3} />
            <rect x={x - 1.6} y={top / 3} width={3.2} height={Math.max(1, size / 3)} />
          </g>
        );
      })}
    </>
  );
};

const Steps = ({ curve, up }: { curve: string; up: string }) => {
  const rnd = random(19);
  const points = parse(curve);
  let last = points[0][1];
  return (
    <>
      {Array.from({ length: COUNT }, (_, i) => {
        const x = barX(i);
        const close = sample(points, (x + 7) * 1.845) + (rnd() - 0.5) * 2;
        const open = last;
        last = close;
        const top = Math.min(open, close);
        const size = Math.abs(open - close);
        return (
          <rect
            key={i}
            x={x - 2}
            y={top / 3 + 489.5}
            width={3.6}
            height={Math.max(1, size / 3)}
            fill={close < open ? up : '#dcdcdc'}
            opacity={size < 2 ? 0.7 : 1}
          />
        );
      })}
    </>
  );
};

const Funding = () => {
  const points = parse(CURVES.funding);
  return (
    <>
      <rect x={0} y={906} width={1195} height={0.5} fill={BLUE} />
      {Array.from({ length: COUNT }, (_, i) => {
        const x = barX(i);
        const v = (sample(points, (x + 7) * 1.845) - 1248) / 3;
        return (
          <rect key={i} x={x - 1.6} y={906 + Math.min(0, v)} width={3} height={Math.abs(v)} fill={v < 0 ? BLUE : RED} />
        );
      })}
    </>
  );
};

const Net = () => {
  const rnd = random(5);
  const colors = ['#a3a3a3', '#4ade80', '#e05252'];
  return (
    <>
      {Array.from({ length: COUNT }, (_, i) => {
        const v = (rnd() - 0.5) * 5;
        return (
          <rect
            key={i}
            x={barX(i) - 1.5}
            y={545.7 + Math.min(0, v)}
            width={3}
            height={Math.abs(v)}
            fill={colors[rnd() < 0.4 ? 0 : v < 0 ? 1 : 2]}
            opacity={0.25}
          />
        );
      })}
      {parse(NET).map(([x, y, c], i) => {
        const v = (y - 168) / 3;
        const peak = x === 1012;
        return (
          <rect
            key={i}
            x={gridX(x) - 1.6}
            y={545.7 + Math.min(0, v)}
            width={3}
            height={Math.abs(v)}
            fill={peak ? '#5cf598' : colors[c]}
            opacity={peak ? 1 : Math.min(0.8, (c ? 0.3 : 0.1) + Math.abs(v) / (c ? 55 : 70))}
          />
        );
      })}
    </>
  );
};

interface DeltaProps {
  spikes: string;
  base: number;
  noise: number;
  seed: number;
  wicks?: boolean;
}

const Delta = ({ spikes, base, noise, seed, wicks }: DeltaProps) => {
  const rnd = random(seed);
  const bars: { [index: number]: number } = {};
  parse(spikes).forEach(([x, y]) => {
    bars[Math.round((gridX(x) - barX(0)) / 4)] = (y - base) / 3;
  });
  const zero = base / 3 + 960;
  return (
    <>
      {Array.from({ length: COUNT }, (_, i) => {
        const x = barX(i);
        const filler = (rnd() - 0.5) * noise * (wicks ? 1 : rnd() < 0.5 ? 0 : 1);
        const v = bars[i] === undefined ? filler : bars[i];
        const tail = rnd() * (3 + Math.abs(v) * 0.25);
        const head = rnd() * noise * 0.5;
        const fill = v < 0 ? BLUE : RED;
        const top = Math.min(0, v);
        const bottom = Math.max(0, v);
        return (
          <g key={i} fill={fill}>
            {wicks && (
              <rect
                x={x - 0.5}
                y={zero + top - (v < 0 ? tail : head)}
                width={1}
                height={bottom - top + tail + head}
                opacity={0.75}
              />
            )}
            <rect x={x - 1.6} y={zero + top} width={3} height={Math.abs(v)} />
          </g>
        );
      })}
    </>
  );
};

const HeatMap = () => (
  <>
    {HEAT.map((row, k) => {
      const y = (197 + 21.065 * k) / 3;
      const parts: React.ReactNode[] = [];
      for (let i = 0; i < row.length; i += 2) {
        const from = i ? Number(row[i - 1]) + 1 : 0;
        const to = i + 1 < row.length ? Number(row[i + 1]) + 1 : 1193;
        if (row[i] !== '-') {
          parts.push(<rect key={i} x={from} y={y - 3} width={to - from} height={5.9} fill={PLASMA[row[i]]} />);
        }
      }
      const width = parseInt(BOOK[k], 10);
      return (
        <g key={k}>
          {parts}
          <rect x={1611 - width} y={y - 3} width={width} height={5.9} fill={PLASMA[BOOK[k].slice(-1)]} />
        </g>
      );
    })}
  </>
);

const VolumeProfile = () => (
  <>
    {PROFILE.map(([buy, sell], i) => {
      const y = (543 + i * 24.08) / 3 - 3.6;
      return (
        <g key={i} opacity={i < 20 ? 1 : 0.42}>
          <rect x={0} y={y} width={gridX(buy)} height={7.2} fill={BLUE} />
          <rect x={gridX(buy)} y={y} width={(sell - buy) / 1.845} height={7.2} fill={RED} />
        </g>
      );
    })}
  </>
);

const Overlays = () => (
  <>
    {BUBBLES.map((b, i) => (
      <g key={i}>
        <circle
          cx={gridX(b.x)}
          cy={b.y / 3}
          r={b.r}
          fill={b.up ? BLUE : RED}
          fillOpacity={0.45}
          stroke={b.up ? BLUE : RED}
        />
        <text x={gridX(b.x)} y={b.y / 3 + 4} fontSize={11} textAnchor="middle" fill="#c7cbe0" letterSpacing={-0.8}>
          {b.label}
        </text>
      </g>
    ))}
    {VWAP.map(line => (
      <polyline
        key={line.color}
        points={parse(line.points).map(([x, y]) => `${gridX(x)},${y / 3}`).join(' ')}
        fill="none"
        stroke={line.color}
        strokeWidth={line.width}
      />
    ))}
  </>
);

/* ---------- panes ---------- */

interface Tick {
  y: number;
  label: string;
}

interface Tag extends Tick {
  w: number;
  fill: string;
  color?: string;
}

interface PaneProps {
  top: number;
  bottom: number;
  plot: number;
  axis: number;
  ticks: Tick[];
  tags?: Tag[];
  name?: string;
  info?: string;
  children: React.ReactNode;
}

const Pane = ({ top, bottom, plot, axis, ticks, tags = [], name, info, children }: PaneProps) => (
  <PaneRow h={bottom - top}>
    <Plot width={plot} height={bottom - top} viewBox={`0 ${top} ${plot} ${bottom - top - 1}`} preserveAspectRatio="xMinYMin slice">
      {children}
    </Plot>
    <Axis width={axis} height={bottom - top} viewBox={`0 ${top} ${axis} ${bottom - top}`}>
      {ticks.map(t => (
        <text key={t.y} x={5.5} y={t.y + 4.5} fill={TEXT}>
          {t.label}
        </text>
      ))}
      {tags.map(t => (
        <g key={t.y}>
          <rect x={0} y={t.y - 10} width={t.w} height={20.5} fill={t.fill} />
          <text x={4.5} y={t.y + 4.5} fill={t.color || '#111'}>
            {t.label}
          </text>
        </g>
      ))}
    </Axis>
    {name && (
      <PaneTitle>
        {name} <span>{info}</span>
      </PaneTitle>
    )}
  </PaneRow>
);

const ticks = (start: number, step: number, labels: string): Tick[] =>
  labels.split(' ').map((label, i) => ({ y: start + i * step, label }));

const times = (labels: string, start: number, step: number) =>
  labels.split(' ').map((label, i) => (
    <text key={i} x={start + i * step} y={17.5} fill={TEXT} textAnchor="middle">
      {label}
    </text>
  ));

const PriceLine = ({ y, width }: { y: number; width: number }) => (
  <line x1={0} x2={width} y1={y} y2={y} stroke={GREEN} strokeOpacity={0.6} strokeWidth={1.6} strokeDasharray="2 2" />
);

const lastPrice = (y: number): Tag[] => [
  { y, label: '77246.1', w: 57, fill: GREEN },
  { y: y + 20, label: '20:58', w: 43, fill: GREEN },
];

const LeftCharts = () => {
  const size = { plot: 1628, axis: 69 };
  return (
    <Charts>
      <Pane
        {...size}
        top={64}
        bottom={552}
        ticks={ticks(115.3, 79.6, '78500.0 78000.0 77500.0 77000.0 76500.0 76000.0')}
        tags={lastPrice(314.5)}
      >
        <Orders />
        <Candles rows={PRICE} scale={2.8} />
        <PriceLine y={314.5} width={1628} />
        <Logo x={12} y={514} />
      </Pane>
      <Pane
        {...size}
        top={552}
        bottom={798}
        ticks={ticks(576.7, 25.5, '5.20B 5B 4.80B 4.60B 4.40B 4.20B 4B 3.80B 3.60B')}
        name="CVD"
        info="btc/usd aggregated 13 exchanges | 4.34B"
      >
        <Candles rows={CVD} scale={1.762} offset={550} />
      </Pane>
      <Pane
        {...size}
        top={798}
        bottom={1094}
        ticks={ticks(821.5, 55.3, '400M 300M 200M 100M 0')}
        name="CVD"
        info="btc/usd aggregated spot | 120.88M"
      >
        <Candles rows={CVD_SPOT} scale={1.762} offset={550} />
      </Pane>
      <Pane
        {...size}
        top={1094}
        bottom={1381}
        ticks={ticks(1134.6, 50.8, '18.20B 18B 17.80B 17.60B 17.40B')}
        name="Open Interest"
        info="btc/usd aggregated 9 exchanges | 17.66B"
      >
        <Candles rows={OPEN_INTEREST} scale={1.762} offset={550} />
      </Pane>
      <TimeAxis width={1697} height={26}>
        {times(
          '17/05 08:00 13:00 19:00 18/05 06:00 12:00 17:00 23:00 19/05 10:00 15:00 21:00 20/05 08:00 14:00 19:00 21/05 06:00 12:00 17:00',
          18,
          78.45
        )}
      </TimeAxis>
    </Charts>
  );
};

const RightCharts = () => {
  const size = { plot: 1611, axis: 81 };
  return (
    <Charts focused>
      <Pane
        {...size}
        top={64}
        bottom={497}
        ticks={ticks(107.5, 72.8, '84000.0 82000.0 80000.0 78000.0 76000.0 74000.0')}
        tags={lastPrice(352.5)}
      >
        <HeatMap />
        <HourCandles />
        <VolumeProfile />
        <Overlays />
        <PriceLine y={352.8} width={1611} />
        <Logo x={12} y={459} />
      </Pane>
      <Pane
        {...size}
        top={497}
        bottom={612}
        ticks={[
          { y: 521.5, label: '1000' },
          { y: 571.5, label: '-1000' },
          { y: 596.7, label: '-2K' },
        ]}
        tags={[{ y: 545.3, label: '25.61', w: 43, fill: '#555', color: '#fff' }]}
        name="Net Positioning"
      >
        <Net />
      </Pane>
      <Pane
        {...size}
        top={612}
        bottom={716}
        ticks={ticks(628.7, 18.5, '6K 4K 2K 0 -2K')}
        name="NL"
        info="Cum Est. -1.85K | Net Delta -3"
      >
        <Steps curve={CURVES.longs} up={BLUE} />
      </Pane>
      <Pane
        {...size}
        top={716}
        bottom={839}
        ticks={ticks(735.7, 22, '10K 8K 6K 4K 2K')}
        name="NS"
        info="Cum Est. 7.50K | Net Delta -23"
      >
        <Steps curve={CURVES.shorts} up={RED} />
      </Pane>
      <Pane
        {...size}
        top={839}
        bottom={965}
        ticks={ticks(848.7, 29, '0.0 0.0 0.0 -0.0')}
        tags={[{ y: 867, label: '0', w: 15, fill: BLUE, color: '#fff' }]}
        name="Funding Rate"
        info="0.01"
      >
        <Funding />
      </Pane>
      <Pane
        {...size}
        top={965}
        bottom={1111}
        ticks={[
          { y: 970.7, label: '100M' },
          { y: 1004.7, label: '50M' },
          { y: 1072.7, label: '-50M' },
          { y: 1106.5, label: '-100M' },
        ]}
        tags={[{ y: 1033, label: '7M', w: 22, fill: ACCENT }]}
        name="Delta Volume"
        info="btc/usd aggregated spot | 120.88M"
      >
        <rect x={537} y={1011} width={1.5} height={59} fill={BLUE} opacity={0.6} />
        <rect x={541} y={990} width={1.5} height={96} fill={BLUE} opacity={0.6} />
        <Delta spikes={DELTA_SPOT} base={234} noise={12} seed={8} wicks />
      </Pane>
      <Pane
        {...size}
        top={1111}
        bottom={1257}
        ticks={[
          { y: 1114.7, label: '800M' },
          { y: 1143.7, label: '400M' },
          { y: 1202.7, label: '-400M' },
          { y: 1231.7, label: '-800M' },
        ]}
        tags={[{ y: 1168.5, label: '48M', w: 29, fill: ACCENT }]}
        name="Delta Volume"
        info="btc/usd aggregated 9 exchanges | 4.44B"
      >
        <Delta spikes={DELTA_ALL} base={636} noise={10} seed={21} wicks />
      </Pane>
      <Pane
        {...size}
        top={1257}
        bottom={1381}
        ticks={[
          { y: 1270.7, label: '10000000.0' },
          ...ticks(1306.7, 18.5, '-10000000.0 -20000000.0 -30000000.0 -40000000.0 -50000000.0'),
        ]}
        tags={[{ y: 1288.5, label: '-379K', w: 43, fill: RED }]}
        name="Liquidations"
        info="B 379.20K S 9.58K"
      >
        <Delta spikes={LIQUIDATIONS} base={984} noise={1.6} seed={9} />
      </Pane>
      <TimeAxis width={1692} height={26}>
        {times(
          '09/05 14:00 10/05 17:00 11/05 21:00 12/05 13/05 15:00 14/05 19:00 15/05 22:00 16/05 17/05 16:00 18/05 20:00 19/05 20/05 14:00 21/05 17:00 22/05 21:00 23/05 24/05 15:00 25/05',
          15,
          55.5
        )}
      </TimeAxis>
    </Charts>
  );
};

const TOOLS = ['line', 'nodes', 'path', 'send', 'equal', 'rect', 'brush', 'chart', 'profile', 'ruler', 'peak', 'text', 'layers'];

export default class App extends React.Component {
  render() {
    return (
      <Screen>
        <GlobalStyle />
        <TopBar>
          <Cell w={161} indent={5}>
            BTC/USD@BINANCEF
            <Icon name="chevron" size={15} />
          </Cell>
          <Cell w={39}>1H</Cell>
          <Cell w={217}>
            <Slider>
              <Ramp>
                <Handle color="#440154" edge="#fff" />
                <Handle color="#fde725" edge="#a39a26" />
              </Ramp>
            </Slider>
          </Cell>
          <Cell w={41}>
            <Icon name="hd" color="#3b82f6" weight={1.5} />
          </Cell>
          <Cell w={41}>
            <Icon name="candles" />
          </Cell>
          <Cell w={118}>
            <Icon name="chart" />
            Indicators
          </Cell>
          <Cell w={41}>
            <Icon name="pencil" />
          </Cell>
          <Cell w={41}>
            <Icon name="folder" />
          </Cell>
          <Cell w={64}>
            <Icon name="dollar" size={15} />
            USD
          </Cell>
          <Cell w={39}>
            <Icon name="expand" size={15} />
          </Cell>
          <Cell w={39} end>
            <Icon name="drop" size={15} />
          </Cell>
          <Spacer />
          <Cell w={89}>
            OB_LIQ
            <Icon name="chevron" />
          </Cell>
          <Slots>
            {[1, 2, 3, 4, 5, 6, 7, 8, 9].map(n => (
              <Slot key={n} active={n === 9}>
                {n}
              </Slot>
            ))}
          </Slots>
          <Cell w={39}>
            <Icon name="bell" size={15} />
          </Cell>
          <Cell w={41}>
            <Icon name="list" size={15} />
          </Cell>
          <Cell w={88}>
            <Icon name="plus" size={15} />
            Widget
          </Cell>
          <Cell w={41}>
            <Pressed>
              <Icon name="camera" />
            </Pressed>
          </Cell>
          <Cell w={41}>
            <Icon name="gear" />
          </Cell>
          <Cell w={45}>
            <Icon name="bot" />
          </Cell>
          <Cell w={41} end>
            <Icon name="user" size={15} />
          </Cell>
        </TopBar>
        <Body>
          <Sidebar>
            <Tool active>
              <Icon name="pointer" weight={1.5} />
            </Tool>
            <Rule />
            {TOOLS.map(name => (
              <Tool key={name}>
                <Icon name={name} />
              </Tool>
            ))}
            <Rule />
            <Tool dim>
              <Icon name="undo" />
            </Tool>
            <Tool dim>
              <Icon name="redo" />
            </Tool>
            <Rule />
            <Tool>
              <Icon name="back" size={15} />
            </Tool>
          </Sidebar>
          <Widget w={1697}>
            <TabBar>
              <Tab>
                btc/usd binancef 1H
                <Icon name="close" weight={1.1} />
              </Tab>
              <Icon name="close" weight={1.1} />
            </TabBar>
            <LeftCharts />
          </Widget>
          <Split />
          <Widget w={1692}>
            <TabBar>
              <Tab focused>
                btc/usd binancef 1H
                <Icon name="close" weight={1.1} />
              </Tab>
              <Icon name="close" weight={1.1} />
            </TabBar>
            <RightCharts />
          </Widget>
        </Body>
        <StatusBar>
          <Version>MMT v4.3.0</Version>
          <Spacer />
          <Cell w={67}>120 fps</Cell>
          <Cell w={80}>
            Europe
            <Icon name="chevron" />
          </Cell>
          <Cell w={51}>54 ms</Cell>
          <Cell w={195} end>
            07:39:02 New York (UTC-4)
          </Cell>
        </StatusBar>
      </Screen>
    );
  }
}
